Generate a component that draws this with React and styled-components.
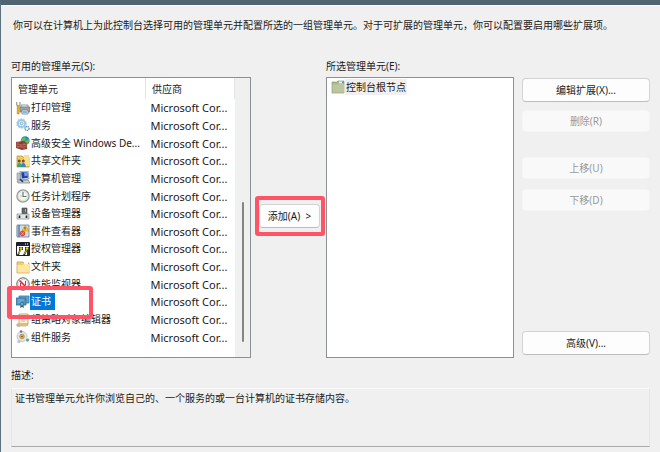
import React from "react";
import styled, { createGlobalStyle, css } from "styled-components";

const GlobalStyle = createGlobalStyle`
  * { box-sizing: border-box; }
  body {
    margin: 0;
    background: #f0f0f0;
    color: #1a1a1a;
    font-family: "Noto Sans", "Noto Sans CJK SC", sans-serif;
    font-size: 10px;
    line-height: 16px;
  }
  button { font: inherit; color: inherit; }
`;

const Dialog = styled.main`
  min-height: 100vh;
  padding: 12px 10px 5px;
  border-top: 5px solid #4f6672;
  border-left: 1px solid #5c727e;
  background: #f0f0f0;
  box-shadow: inset 0 1px 0 #fbfbfb;
`;

const Intro = styled.p`
  margin: 0 0 24px;
  padding-left: 2px;
  white-space: nowrap;
`;

const Columns = styled.div`
  display: grid;
  grid-template-columns: 240fr 75px 188fr 136px;
`;

const Column = styled.section`
  display: flex;
  flex-direction: column;
  min-width: 0;
`;

const Label = styled.h2`
  margin: 0;
  height: 20px;
  line-height: 18px;
  font-size: 10px;
  font-weight: 400;
`;

const Box = styled.div`
  display: flex;
  flex: 1;
  min-height: 281px;
  border: 1px solid #8b9097;
  background: #fff;
`;

const TableArea = styled.div`
  flex: 1;
  min-width: 0;
  padding-bottom: 11px;
`;

const SnapinTable = styled.table`
  width: 100%;
  height: 268px;
  table-layout: fixed;
  border-collapse: collapse;
  text-align: left;
`;

const HeadCell = styled.th`
  width: ${(p) => p.$width};
  height: 21px;
  padding: 0 6px;
  border-right: 1px solid #e4e4e4;
  font-weight: 400;
`;

const Cell = styled.td`
  position: relative;
  padding: 0 4px;
  white-space: nowrap;
  line-height: 15px;
`;

const VendorCell = styled(Cell)`
  padding: 0 5px;
  font-size: 11px;
`;

const Item = styled.div`
  display: flex;
  align-items: center;
`;

const Name = styled.span`
  padding: 1px 4px 1px 1px;
  ${(p) => p.$selected && css`
    background: #0078d7;
    color: #fff;
  `}
`;

const Icon = styled.svg`
  flex: none;
  width: 14px;
  height: 14px;
`;

const RowMark = styled.span`
  position: absolute;
  z-index: 1;
  top: -7px;
  bottom: -8px;
  left: -5px;
  width: 86px;
  border: 4px solid #ff5468;
  border-radius: 3px;
  pointer-events: none;
`;

const Scrollbar = styled.div`
  display: flex;
  justify-content: center;
  width: 15px;
  padding: 124px 0 15px;
  background: #f0f0f0;
`;

const Thumb = styled.div`
  width: 2px;
  border-radius: 1px;
  background: #858585;
`;

const AddArea = styled.div`
  padding: 139px 1px 0 4px;
`;

const AddMark = styled.div`
  padding: 4px 1px 4px 0;
  border: 4px solid #ff5468;
  border-radius: 3px;
`;

const Button = styled.button`
  display: block;
  width: 100%;
  height: 24px;
  padding: 0;
  border: 1px solid #d3d3d3;
  border-bottom-color: #bdbdbd;
  border-radius: 4px;
  background: #fdfdfd;
  white-space: nowrap;

  &:disabled {
    height: 22px;
    border-color: #f5f5f5;
    background: #f9f9f9;
    color: #9a9a9a;
  }
`;

const Actions = styled.div`
  display: flex;
  flex-direction: column;
  gap: 10px;
  padding: 21px 0 3px 8px;
`;

const ButtonGroup = styled.div`
  display: grid;
  gap: ${(p) => p.$gap};
  margin-bottom: 15px;
`;

const BottomAction = styled.div`
  margin-top: auto;
`;

const Tree = styled.ul`
  margin: 0;
  padding: 1px 4px;
  list-style: none;
`;

const TreeLabel = styled.span`
  padding: 0 1px;
  background: #f0f0f0;
`;

const DescriptionLabel = styled(Label)`
  margin-top: 8px;
  height: 22px;
`;

const Description = styled.p`
  margin: 0;
  min-height: 59px;
  padding: 1px 3px;
  border: 1px solid #e6e6e6;
  border-top-color: #fafafa;
  border-bottom-color: #a8a8a8;
`;

const icons = {
  printer: (
    <>
      <path d="M5 4h7v3H5z" fill="#edf2f4" stroke="#77858e" strokeWidth=".8" />
      <path d="M4 6h10v5H4z" fill="#9ba4aa" stroke="#65717a" strokeWidth=".7" />
      <path d="M6 9h6v4H6z" fill="#eef5fa" stroke="#667f91" strokeWidth=".8" />
      <path d="M7 11h4" stroke="#207ec1" />
      <path d="M.7 1v3l1.6 1.3L4 4V1" fill="none" stroke="#a4a69f" strokeWidth="1.4" />
      <path d="M1.2 5h2v8h-2z" fill="#eeb21c" stroke="#b47c0d" strokeWidth=".5" />
    </>
  ),
  gears: (
    <>
      <circle cx="5.5" cy="5.5" r="3.6" fill="#e8f5fb" stroke="#9cc8e0" strokeWidth="2" />
      <circle cx="5.5" cy="5.5" r="4.8" fill="none" stroke="#9bc6dc" strokeDasharray="1.5 1.5" />
      <circle cx="5.5" cy="5.5" r="1.3" fill="#fff" stroke="#75a9ca" />
      <circle cx="11" cy="10.5" r="2" fill="#fff" stroke="#6296bb" strokeWidth="1.5" strokeDasharray="1.3 .5" />
    </>
  ),
  firewall: (
    <>
      <circle cx="9.2" cy="4.7" r="4.4" fill="#2585cd" />
      <path d="M6 2l3-1 1 2-2 2H5zm4 2 3-1v3l-2 2-2-2z" fill="#65bd4d" />
      <path d="m0 6 7-1 4 2v6l-5 1-6-2z" fill="#913d32" />
      <path d="m0 8 6 1 5-1M0 10l6 1 5-1M2 6v2m3 1v2m3-4v2m-6 1v2m6-1v2" fill="none" stroke="#d08a78" strokeWidth=".6" />
    </>
  ),
  share: (
    <>
      <path d="M1 2h5l1 1h6v10H1z" fill="#edc963" stroke="#b88d2b" strokeWidth=".7" />
      <path d="M8 1h5v11H8z" fill="#f7df91" />
      <circle cx="3.2" cy="7" r="1.5" fill="#764d30" />
      <circle cx="7.3" cy="7" r="1.5" fill="#7b5435" />
      <path d="M1 13q0-4 2.3-4t2.2 4z" fill="#36a776" />
      <path d="M5 13q0-4 2.3-4t2.4 4z" fill="#3985be" />
    </>
  ),
  computer: (
    <>
      <path d="M1 2h3v7H1z" fill="#c0c8ce" stroke="#818e98" strokeWidth=".6" />
      <path d="M4 0h8l1 8-8 1z" fill="#d7dce1" stroke="#6f7f92" strokeWidth=".7" />
      <path d="M5.2 1.2h6l.7 5.6-6 .8z" fill="#173eac" />
      <path d="M8 1.5h3l.5 3-3 1z" fill="#729eea" />
      <path d="m1 10 11-1 2 3H2z" fill="#cfd4d7" stroke="#717b83" strokeWidth=".7" />
      <path d="m4 8 3 3" stroke="#233c71" strokeWidth="1.5" />
    </>
  ),
  clock: (
    <>
      <circle cx="7" cy="7" r="6.1" fill="#e9edf0" stroke="#969b9f" strokeWidth="1.3" />
      <circle cx="7" cy="7" r="4.5" fill="#fff6dc" stroke="#d3d7d8" strokeWidth=".7" />
      <path d="M7 3v4.5h3.5" fill="none" stroke="#3d80b6" strokeWidth="1.2" />
      <path d="M7 7H4" stroke="#e5b458" />
    </>
  ),
  device: (
    <>
      <path d="M6 1h5v6H6z" fill="#62666b" stroke="#424548" strokeWidth=".6" />
      <path d="M9 2h1v3H9z" fill="#a8b1b6" />
      <path d="M1 7h12v5H1z" fill="#e3e5e6" stroke="#85898c" strokeWidth=".7" />
      <path d="M3.5 8.5v2.5m7-2.5v2.5" stroke="#222" strokeWidth="1.6" />
    </>
  ),
  event: (
    <>
      <path d="M1 1h12v12H1z" fill="#cedded" stroke="#68809c" strokeWidth=".8" />
      <path d="M3 1v12" stroke="#5475a0" strokeWidth="1.5" />
      <path d="M0 3h3M0 5h3M0 7h3M0 9h3M0 11h3" stroke="#8ba0b4" strokeWidth=".7" />
      <path d="m9 1 4 6H6z" fill="#f5c830" stroke="#bd8919" strokeWidth=".5" />
      <path d="M9 3v2m0 .6v.7" stroke="#564821" />
      <circle cx="6.5" cy="9.5" r="2.7" fill="#d84b3f" />
      <path d="m5.5 8.5 2 2m0-2-2 2" stroke="#fff" strokeWidth=".7" />
    </>
  ),
  authorize: (
    <>
      <path d="M.5.5h13v13H.5z" fill="#fff" stroke="#1d1d20" />
      <path d="M1 1h12v3H1z" fill="#15204f" />
      <path d="M9 2h1m1 0h1" stroke="#fff" />
      <path d="M3 5h4v3H5l-2 5H1l2-4zm6 0h4v8h-2V9l-2 4H7l2-4z" fill="#333327" />
      <circle cx="5" cy="6.5" r="1.3" fill="#eed42d" />
      <circle cx="11" cy="6.5" r="1.3" fill="#eed42d" />
      <path d="m4.5 8-2 4M10.500 8l-2 4" fill="none" stroke="#c9b51c" strokeWidth="1" />
    </>
  ),
  folder: (
    <>
      <path d="M1 2h6l1 1h5v10H1z" fill="#f0cd76" stroke="#c59a42" strokeWidth=".7" />
      <path d="M8 1.5h4v3H8z" fill="#fffdf1" />
      <path d="M1.5 5H7l1-1h5v8.5H1.5z" fill="#ffe6a1" />
    </>
  ),
  monitor: (
    <>
      <circle cx="7" cy="7" r="6.2" fill="#fff" stroke="#595c60" strokeWidth="1" />
      <circle cx="7" cy="7" r="4.8" fill="#fff" stroke="#c9bfc1" strokeWidth=".7" />
      <path d="m3.5 3.5 7 7" stroke="#d52c37" strokeWidth="1.7" />
      <path d="M4.500 9.500V6m5 2V4" stroke="#d52c37" strokeWidth="1" />
    </>
  ),
  certificate: (
    <>
      <path d="M3 1h10v7H3z" fill="#68a5ce" stroke="#39749e" strokeWidth=".8" />
      <path d="M0 3h10v7H0z" fill="#4e94c4" stroke="#306d98" strokeWidth=".8" />
      <path d="M2 5h6M2 7h4" stroke="#9bc8e1" strokeWidth=".7" />
      <path d="m5 9-1 4 2-1 2 1-1-4" fill="#27658c" />
      <circle cx="6" cy="9" r="1.8" fill="#73abb8" stroke="#2c6882" strokeWidth=".7" />
    </>
  ),
  policy: (
    <>
      <path d="M3 1h9v10H4v2H1v-2h2z" fill="#faf1d5" stroke="#ad9562" strokeWidth=".8" />
      <path d="M3 11h9q0 2-2 2H2q2-.2 1-2M5 4h5M5 6h5M5 8h4" fill="#e5cf98" stroke="#bda36c" strokeWidth=".7" />
    </>
  ),
  component: (
    <>
      <circle cx="6" cy="6.500" r="5" fill="#e7e5eb" stroke="#c5c2cd" strokeWidth="1" />
      <circle cx="6" cy="6.500" r="2.3" fill="#eab630" stroke="#937533" strokeWidth=".6" />
      <circle cx="6" cy="6.500" r=".8" fill="#614b39" />
      <circle cx="5" cy="1.500" r="1.2" fill="#7c64b4" />
      <circle cx="11.500" cy="10" r="2" fill="#65ad6e" stroke="#fff" strokeWidth=".6" />
      <circle cx="3" cy="11.500" r="1.7" fill="#b6c9db" />
    </>
  ),
  root: (
    <>
      <path d="M1 2h5l1-1h6v12H1z" fill="#adb88c" stroke="#8b9b72" strokeWidth=".7" />
      <path d="M8 1.5h4v2H8z" fill="#e6f3f8" />
      <path d="M11 1.5h2v2h-2z" fill="#4c9bc6" />
      <path d="M1.5 4.5H7l1-1h5v9H1.5z" fill="#bdc69f" />
    </>
  ),
};

const snapins = [
  ["打印管理", "printer"],
  ["服务", "gears"],
  ["高级安全 Windows De...", "firewall"],
  ["共享文件夹", "share"],
  ["计算机管理", "computer"],
  ["任务计划程序", "clock"],
  ["设备管理器", "device"],
  ["事件查看器", "event"],
  ["授权管理器", "authorize"],
  ["文件夹", "folder"],
  ["性能监视器", "monitor"],
  ["证书", "certificate"],
  ["组策略对象编辑器", "policy"],
  ["组件服务", "component"],
];

function Glyph({ name }) {
  return <Icon viewBox="0 0 14 14" aria-hidden="true">{icons[name]}</Icon>;
}

export default function App() {
  return (
    <>
      <GlobalStyle />
      <Dialog>
        <Intro>
          你可以在计算机上为此控制台选择可用的管理单元并配置所选的一组管理单元。对于可扩展的管理单元，你可以配置要启用哪些扩展项。
        </Intro>
        <Columns>
          <Column>
            <Label id="available">可用的管理单元(S):</Label>
            <Box>
              <TableArea>
                <SnapinTable aria-labelledby="available">
                  <thead>
                    <tr>
                      <HeadCell $width="60%">管理单元</HeadCell>
                      <HeadCell $width="40%">供应商</HeadCell>
                    </tr>
                  </thead>
                  <tbody>
                    {snapins.map(([name, icon]) => {
                      const selected = name === "证书";
                      return (
                        <tr key={name} aria-selected={selected}>
                          <Cell>
                            <Item>
                              <Glyph name={icon} />
                              <Name $selected={selected}>{name}</Name>
                            </Item>
                            {selected && <RowMark />}
                          </Cell>
                          <VendorCell>Microsoft Cor...</VendorCell>
                        </tr>
                      );
                    })}
                  </tbody>
                </SnapinTable>
              </TableArea>
              <Scrollbar><Thumb /></Scrollbar>
            </Box>
          </Column>
          <AddArea>
            <AddMark>
              <Button type="button">添加(A) &nbsp;&gt;</Button>
            </AddMark>
          </AddArea>
          <Column>
            <Label id="chosen">所选管理单元(E):</Label>
            <Box>
              <Tree aria-labelledby="chosen">
                <li>
                  <Item>
                    <Glyph name="root" />
                    <TreeLabel>控制台根节点</TreeLabel>
                  </Item>
                </li>
              </Tree>
            </Box>
          </Column>
          <Actions>
            <ButtonGroup $gap="8px">
              <Button type="button">编辑扩展(X)...</Button>
              <Button type="button" disabled>删除(R)</Button>
            </ButtonGroup>
            <ButtonGroup $gap="10px">
              <Button type="button" disabled>上移(U)</Button>
              <Button type="button" disabled>下移(D)</Button>
            </ButtonGroup>
            <BottomAction>
              <Button type="button">高级(V)...</Button>
            </BottomAction>
          </Actions>
        </Columns>
        <DescriptionLabel>描述:</DescriptionLabel>
        <Description>
          证书管理单元允许你浏览自己的、一个服务的或一台计算机的证书存储内容。
        </Description>
      </Dialog>
    </>
  );
}
